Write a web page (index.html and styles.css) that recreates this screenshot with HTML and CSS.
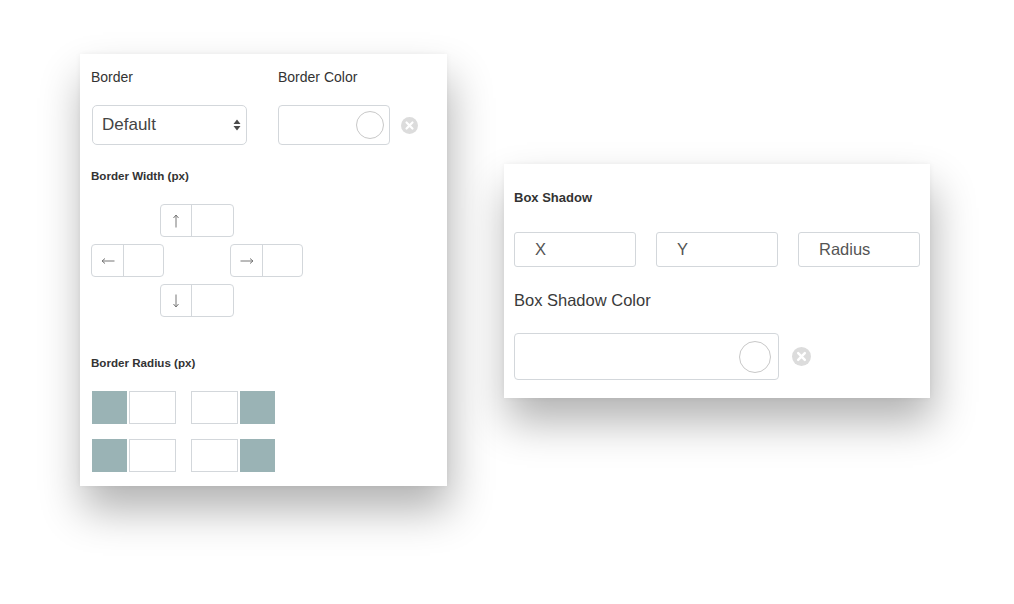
FILE: index.html
```html
<!DOCTYPE html>
<html>
<head>
<meta charset="utf-8">
<link rel="stylesheet" href="styles.css">
</head>
<body>
<div class="canvas">
  <section class="panel panel-border">
    <div class="top-row">
      <div class="field field-border">
        <div class="label">Border</div>
        <div class="select">
          <span>Default</span>
          <svg class="updown" width="8" height="12" viewBox="0 0 8 12"><path d="M4 0.5 L7.5 5 H0.5 Z M4 11.5 L7.5 7 H0.5 Z" fill="#4a4a4a"/></svg>
        </div>
      </div>
      <div class="field field-color">
        <div class="label">Border Color</div>
        <div class="color-row">
          <div class="color-input small"><span class="swatch"></span></div>
          <svg class="clear" width="17" height="17" viewBox="0 0 20 20"><circle cx="10" cy="10" r="10" fill="#dcdcdc"/><path d="M6.5 6.5 L13.5 13.5 M13.5 6.5 L6.5 13.5" stroke="#fff" stroke-width="2.6" stroke-linecap="round"/></svg>
        </div>
      </div>
    </div>

    <div class="heading hw">Border Width (px)</div>
    <div class="arrows">
      <div class="arow indent">
        <div class="addon-input"><span class="addon"><svg width="8" height="14" viewBox="0 0 8 14"><path d="M4 1 V13.5 M1.5 4 L4 1 L6.5 4" fill="none" stroke="#777" stroke-width="1"/></svg></span><span class="val"></span></div>
      </div>
      <div class="arow sides">
        <div class="addon-input"><span class="addon"><svg width="14" height="8" viewBox="0 0 14 8"><path d="M1 4 H13.5 M4 1.5 L1 4 L4 6.5" fill="none" stroke="#777" stroke-width="1"/></svg></span><span class="val"></span></div>
        <div class="addon-input"><span class="addon"><svg width="14" height="8" viewBox="0 0 14 8"><path d="M0.5 4 H13 M10 1.5 L13 4 L10 6.5" fill="none" stroke="#777" stroke-width="1"/></svg></span><span class="val"></span></div>
      </div>
      <div class="arow indent">
        <div class="addon-input"><span class="addon"><svg width="8" height="14" viewBox="0 0 8 14"><path d="M4 0.5 V13 M1.5 10 L4 13 L6.5 10" fill="none" stroke="#777" stroke-width="1"/></svg></span><span class="val"></span></div>
      </div>
    </div>

    <div class="heading hr">Border Radius (px)</div>
    <div class="radius">
      <div class="rrow">
        <div class="rpair"><span class="teal"></span><span class="rin"></span></div>
        <div class="rpair"><span class="rin"></span><span class="teal"></span></div>
      </div>
      <div class="rrow">
        <div class="rpair"><span class="teal"></span><span class="rin"></span></div>
        <div class="rpair"><span class="rin"></span><span class="teal"></span></div>
      </div>
    </div>
  </section>

  <section class="panel panel-shadow">
    <div class="heading hs">Box Shadow</div>
    <div class="xyz">
      <div class="tin">X</div>
      <div class="tin">Y</div>
      <div class="tin">Radius</div>
    </div>
    <div class="label big">Box Shadow Color</div>
    <div class="color-row">
      <div class="color-input large"><span class="swatch"></span></div>
      <svg class="clear big" width="19" height="19" viewBox="0 0 20 20"><circle cx="10" cy="10" r="10" fill="#dcdcdc"/><path d="M6.5 6.5 L13.5 13.5 M13.5 6.5 L6.5 13.5" stroke="#fff" stroke-width="2.6" stroke-linecap="round"/></svg>
    </div>
  </section>
</div>
</body>
</html>
```

FILE: styles.css
```css
* { box-sizing: border-box; }
html, body { margin: 0; padding: 0; background: #ffffff; }
body {
  font-family: "Liberation Sans", Arial, sans-serif;
  color: #333;
  width: 1014px;
  height: 604px;
  overflow: hidden;
}
.canvas {
  display: flex;
  align-items: flex-start;
  padding-left: 80px;
}
.panel {
  background: #fff;
  box-shadow: 3px 24px 40px rgba(0,0,0,0.3), 0 0 6px rgba(0,0,0,0.05);
}
.panel-border {
  margin-top: 54px;
  width: 367px;
  height: 432px;
  padding: 15px 0 0 11px;
}
.panel-shadow {
  margin-top: 164px;
  margin-left: 57px;
  width: 426px;
  height: 234px;
  padding: 26px 0 0 10px;
}
.label {
  font-size: 14px;
  line-height: 16px;
  color: #333;
}
.top-row { display: flex; }
.field-border { width: 187px; }
.field-border .select { margin-top: 20px; margin-left: 1px; }
.field-color .color-row { margin-top: 20px; }
.select {
  width: 155px;
  height: 40px;
  border: 1px solid #d3d7db;
  border-radius: 5px;
  display: flex;
  align-items: center;
  justify-content: space-between;
  padding: 0 5px 0 9px;
  font-size: 17px;
  color: #444;
}
.color-row { display: flex; align-items: center; }
.color-input {
  border: 1px solid #d3d7db;
  border-radius: 4px;
  display: flex;
  align-items: center;
  justify-content: flex-end;
}
.color-input.small { width: 112px; height: 40px; padding-right: 5px; }
.color-input.large { width: 265px; height: 47px; padding-right: 7px; }
.swatch {
  display: block;
  border: 1px solid #c8c8c8;
  border-radius: 50%;
  background: #fff;
}
.small .swatch { width: 28px; height: 28px; }
.large .swatch { width: 32px; height: 32px; }
.clear { margin-left: 11px; display: block; }
.clear.big { margin-left: 13px; }

.heading {
  font-size: 11.6px;
  font-weight: bold;
  line-height: 14px;
  color: #333;
}
.hw { margin-top: 24px; }
.hr { margin-top: 39px; }
.hs { font-size: 13px; line-height: 16px; }

.arrows { margin-top: 21px; display: flex; flex-direction: column; gap: 7px; }
.arow { display: flex; }
.arow.indent { padding-left: 69px; }
.arow.sides { gap: 66px; }
.addon-input {
  display: flex;
  width: 74px;
  height: 33px;
  border: 1px solid #d3d7db;
  border-radius: 4px;
}
.addon {
  width: 31px;
  border-right: 1px solid #d3d7db;
  display: flex;
  align-items: center;
  justify-content: center;
}
.addon svg { display: block; }
.sides .addon-input { width: 73px; }
.sides .addon { width: 32px; }
.val { flex: 1; }

.radius { margin-top: 21px; display: flex; flex-direction: column; gap: 15px; margin-left: 1px; }
.rrow { display: flex; gap: 15px; }
.rpair { display: flex; gap: 2px; height: 33px; }
.teal { width: 35px; background: #9ab3b5; }
.rin { width: 47px; border: 1px solid #d3d7db; }

.xyz { display: flex; gap: 20px; margin-top: 26px; }
.tin {
  width: 122px;
  height: 35px;
  border: 1px solid #d3d7db;
  border-radius: 3px;
  font-size: 16.5px;
  color: #555;
  display: flex;
  align-items: center;
  padding-left: 20px;
}
.label.big { font-size: 16.5px; line-height: 18px; margin-top: 24px; color: #3a3a3a; }
.panel-shadow .color-row { margin-top: 24px; }
```
